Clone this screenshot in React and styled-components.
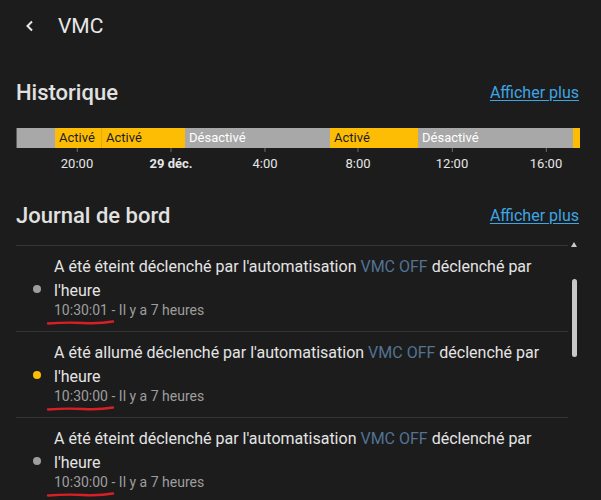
import styled, { createGlobalStyle } from "styled-components";

const GlobalStyle = createGlobalStyle`
  html, body {
    margin: 0;
    padding: 0;
    background: #1c1c1c;
    overflow: hidden;
  }
  body {
    font-family: Roboto, "Noto Sans", sans-serif;
    color: #e1e1e1;
  }
`;

const Page = styled.div`
  width: 601px;
  height: 500px;
  overflow: hidden;
  background: #1c1c1c;
`;

const TopBar = styled.div`
  display: flex;
  align-items: center;
  height: 52px;
  padding-left: 20px;
  gap: 18px;
`;

const BackButton = styled.div`
  width: 20px;
  height: 20px;
  display: flex;
  align-items: center;
  justify-content: center;
`;

const Title = styled.div`
  font-size: 21px;
  font-weight: 400;
  color: #e8e8e8;
`;

const Section = styled.div`
  padding: 0 22px 0 16px;
`;

const SectionHeader = styled.div`
  display: flex;
  align-items: center;
  justify-content: space-between;
  height: 32px;
  margin-top: ${(p) => p.top}px;
`;

const SectionTitle = styled.div`
  font-size: 22px;
  font-weight: 500;
  color: #e1e1e1;
`;

const MoreLink = styled.a`
  font-size: 16px;
  color: #3ea5e5;
  text-decoration: underline;
  text-underline-offset: 2px;
`;

const Bar = styled.div`
  display: flex;
  height: 20px;
  margin-top: 20px;
  border-left: 1px solid #5a5a5a;
`;

const Segment = styled.div`
  flex: none;
  height: 100%;
  box-sizing: border-box;
  padding-left: 4px;
  font-size: 13px;
  line-height: 20px;
  white-space: nowrap;
  overflow: hidden;
  background: ${(p) => (p.on ? "#fdbd05" : "#a8a8a8")};
  color: ${(p) => (p.on ? "#1d1d1d" : "#ffffff")};
  border-left: ${(p) => (p.split ? "1px solid #e5aa05" : "none")};
`;

const Axis = styled.div`
  position: relative;
  height: 30px;
`;

const Tick = styled.div`
  position: absolute;
  top: 0;
  transform: translateX(-50%);
  display: flex;
  flex-direction: column;
  align-items: center;
`;

const TickMark = styled.div`
  width: 1px;
  height: 4px;
  background: #6a6a6a;
`;

const TickLabel = styled.div`
  margin-top: 4px;
  font-size: 13px;
  font-weight: ${(p) => (p.bold ? 700 : 400)};
  color: #e6e6e6;
  white-space: nowrap;
`;

const Journal = styled.div`
  display: flex;
  margin-top: 14px;
  padding-left: 16px;
`;

const Entries = styled.div`
  width: 552px;
  flex: none;
`;

const Entry = styled.div`
  display: flex;
  align-items: center;
  border-top: 1px solid #343434;
  height: 85px;
  box-sizing: content-box;
  padding-left: 17px;
`;

const Dot = styled.div`
  width: 8px;
  height: 8px;
  border-radius: 50%;
  flex: none;
  background: ${(p) => (p.on ? "#fdbd05" : "#9e9e9e")};
`;

const EntryBody = styled.div`
  margin-left: 13px;
  padding: 0 16px 4px 0;
`;

const Message = styled.div`
  font-size: 16px;
  line-height: 24px;
  color: #e4e4e4;
`;

const Automation = styled.span`
  color: #527394;
`;

const Meta = styled.div`
  font-size: 14px;
  line-height: 15px;
  color: #9e9e9e;
`;

const Time = styled.span`
  position: relative;
`;

const Scribble = styled.svg`
  position: absolute;
  left: -7px;
  bottom: -8px;
  width: 68px;
  height: 7px;
  overflow: visible;
`;

const ScrollTrack = styled.div`
  width: 12px;
  flex: none;
  display: flex;
  flex-direction: column;
  align-items: center;
`;

const ArrowUp = styled.div`
  margin-top: -3px;
  width: 0;
  height: 0;
  border-left: 3px solid transparent;
  border-right: 3px solid transparent;
  border-bottom: 5px solid #c8c8c8;
`;

const Thumb = styled.div`
  margin-top: 32px;
  width: 5px;
  height: 78px;
  border-radius: 3px;
  background: #c8c8c8;
`;

const segments = [
  { w: 38, on: false },
  { w: 46, on: true, label: "Activé" },
  { w: 84, on: true, label: "Activé", split: true },
  { w: 145, on: false, label: "Désactivé" },
  { w: 88, on: true, label: "Activé" },
  { w: 155, on: false, label: "Désactivé" },
  { w: 7, on: true },
];

const ticks = [
  { x: 61, label: "20:00" },
  { x: 155, label: "29 déc.", bold: true },
  { x: 249, label: "4:00" },
  { x: 342, label: "8:00" },
  { x: 436, label: "12:00" },
  { x: 530, label: "16:00" },
];

const entries = [
  { on: false, verb: "éteint", time: "10:30:01" },
  { on: true, verb: "allumé", time: "10:30:00" },
  { on: false, verb: "éteint", time: "10:30:00" },
];

function App() {
  return (
    <Page>
      <GlobalStyle />
      <TopBar>
        <BackButton>
          <svg width="14" height="14" viewBox="0 0 14 14">
            <path
              d="M9 2.5 L4.5 7 L9 11.5"
              fill="none"
              stroke="#e8e8e8"
              strokeWidth="2"
            />
          </svg>
        </BackButton>
        <Title>VMC</Title>
      </TopBar>

      <Section>
        <SectionHeader top={24}>
          <SectionTitle>Historique</SectionTitle>
          <MoreLink>Afficher plus</MoreLink>
        </SectionHeader>
        <Bar>
          {segments.map((s, i) => (
            <Segment key={i} on={s.on} split={s.split} style={{ width: s.w }}>
              {s.label}
            </Segment>
          ))}
        </Bar>
        <Axis>
          {ticks.map((t) => (
            <Tick key={t.label} style={{ left: t.x }}>
              <TickMark />
              <TickLabel bold={t.bold}>{t.label}</TickLabel>
            </Tick>
          ))}
        </Axis>
        <SectionHeader top={21}>
          <SectionTitle>Journal de bord</SectionTitle>
          <MoreLink>Afficher plus</MoreLink>
        </SectionHeader>
      </Section>

      <Journal>
        <Entries>
          {entries.map((e, i) => (
            <Entry key={i}>
              <Dot on={e.on} />
              <EntryBody>
                <Message>
                  A été {e.verb} déclenché par l'automatisation{" "}
                  <Automation>VMC OFF</Automation> déclenché par l'heure
                </Message>
                <Meta>
                  <Time>
                    {e.time}
                    <Scribble viewBox="0 0 68 7">
                      <path
                        d="M1 4.5 Q 20 3 36 4 T 66 2.5"
                        fill="none"
                        stroke="#d81f26"
                        strokeWidth="2.4"
                        strokeLinecap="round"
                      />
                    </Scribble>
                  </Time>{" "}
                  - Il y a 7 heures
                </Meta>
              </EntryBody>
            </Entry>
          ))}
        </Entries>
        <ScrollTrack>
          <ArrowUp />
          <Thumb />
        </ScrollTrack>
      </Journal>
    </Page>
  );
}

export default App;
